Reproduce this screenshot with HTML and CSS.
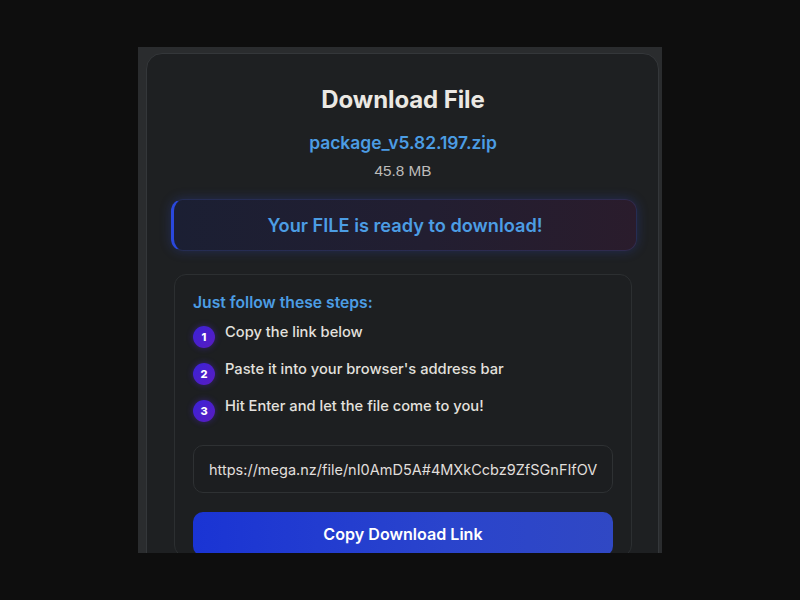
FILE: index.html
```html
<!DOCTYPE html>
<html lang="en">
<head>
<meta charset="utf-8">
<title>Download File</title>
<link rel="stylesheet" href="styles.css">
</head>
<body>
<div class="frame">
  <main class="card">
    <h1 class="title">Download File</h1>
    <div class="filename">package_v5.82.197.zip</div>
    <div class="filesize">45.8 MB</div>
    <div class="banner">Your FILE is ready to download!</div>
    <section class="steps">
      <h2 class="steps-title">Just follow these steps:</h2>
      <ol class="step-list">
        <li class="step"><span class="num">1</span><span class="step-text">Copy the link below</span></li>
        <li class="step"><span class="num">2</span><span class="step-text">Paste it into your browser's address bar</span></li>
        <li class="step"><span class="num">3</span><span class="step-text">Hit Enter and let the file come to you!</span></li>
      </ol>
      <div class="link-box">https://mega.nz/file/nI0AmD5A#4MXkCcbz9ZfSGnFIfOV</div>
      <button class="copy-btn">Copy Download Link</button>
    </section>
  </main>
</div>
</body>
</html>
```
FILE: styles.css
```css
* { box-sizing: border-box; }
html, body { margin: 0; padding: 0; }
body {
  background: #0e0e0e;
  width: 800px;
  height: 600px;
  overflow: hidden;
  display: flex;
  justify-content: center;
  font-family: Inter, "Liberation Sans", sans-serif;
}
.frame {
  margin-top: 47px;
  width: 524px;
  height: 506px;
  background: #2a2c2e;
  padding: 6px 3px 0 8px;
  overflow: hidden;
}
.card {
  background: #1e2022;
  border: 1px solid #34373a;
  border-radius: 16px;
  padding: 32px 26px 40px 27px;
  height: 560px;
}
.title {
  margin: 0;
  text-align: center;
  font-size: 24px;
  font-weight: 700;
  color: #ebe8e3;
  letter-spacing: -0.1px;
  line-height: 28px;
}
.filename {
  margin-top: 18px;
  text-align: center;
  font-size: 17.4px;
  font-weight: 600;
  color: #4c9de4;
  line-height: 22px;
}
.filesize {
  margin-top: 9px;
  text-align: center;
  font-family: "Liberation Sans", Arial, sans-serif;
  font-size: 15.3px;
  color: #bdbcba;
  line-height: 16px;
}
.banner {
  margin: 20px -5px 0 -3px;
  height: 52px;
  display: flex;
  align-items: center;
  justify-content: center;
  border-radius: 12px;
  background: linear-gradient(90deg, #1b1f33 0%, #221e31 55%, #2a1c2c 100%);
  border: 1px solid rgba(70, 90, 180, 0.25);
  border-left: 3px solid #2a48dc;
  box-shadow: 0 0 12px rgba(50, 80, 220, 0.28);
  font-size: 18.2px;
  font-weight: 600;
  color: #4c9de4;
}
.steps {
  margin-top: 23px;
  background: #1d1f21;
  border: 1px solid #2c2f31;
  border-radius: 12px;
  padding: 18px 18px 0 18px;
}
.steps-title {
  margin: 0;
  font-size: 15.7px;
  font-weight: 600;
  color: #4c9de4;
  line-height: 20px;
}
.step-list {
  list-style: none;
  margin: 10px 0 0;
  padding: 0;
  display: flex;
  flex-direction: column;
  gap: 15px;
}
.step {
  display: flex;
  align-items: flex-start;
  gap: 10px;
  height: 22px;
}
.num {
  flex: none;
  width: 22px;
  height: 22px;
  margin-top: 3px;
  border-radius: 50%;
  background: linear-gradient(135deg, #3a22d8 0%, #5a1cc0 100%);
  box-shadow: 0 0 6px rgba(80, 40, 220, 0.45);
  color: #fff;
  font-size: 11px;
  font-weight: 800;
  display: flex;
  align-items: center;
  justify-content: center;
}
.step-text {
  font-size: 14.7px;
  font-weight: 500;
  color: #e3e1de;
  line-height: 20px;
  margin-top: -1px;
}
.link-box {
  margin-top: 26px;
  height: 48px;
  border: 1px solid #2e3133;
  border-radius: 10px;
  background: #1c1e20;
  padding: 0 15px;
  display: flex;
  align-items: center;
  font-size: 14.5px;
  color: #e0dfdc;
  white-space: nowrap;
  overflow: hidden;
}
.copy-btn {
  margin-top: 19px;
  width: 100%;
  height: 44px;
  border: none;
  border-radius: 10px;
  background: linear-gradient(90deg, #1a34d4 0%, #2a44cc 60%, #3048c4 100%);
  color: #fff;
  font-family: Inter, "Liberation Sans", sans-serif;
  font-size: 16.1px;
  font-weight: 600;
}
```
